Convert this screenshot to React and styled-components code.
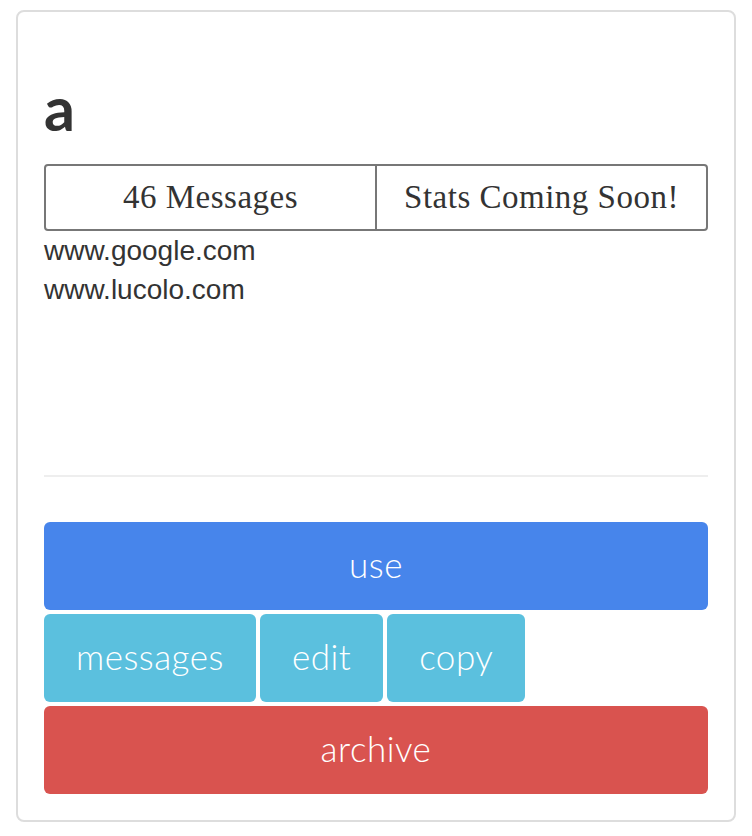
import React from 'react';
import styled, { createGlobalStyle } from 'styled-components';

const GlobalStyle = createGlobalStyle`
  html, body {
    margin: 0;
    padding: 0;
    background: #fff;
  }
`;

const links = ['www.google.com', 'www.lucolo.com'];

const App = () => (
  <>
    <GlobalStyle />
    <Page>
      <Card>
        <Title>a</Title>
        <Stats>
          <StatCell>46 Messages</StatCell>
          <StatCell>Stats Coming Soon!</StatCell>
        </Stats>
        <Links>
          {links.map((link) => (
            <LinkLine key={link}>{link}</LinkLine>
          ))}
        </Links>
        <Divider />
        <Actions>
          <ActionButton variant="primary" block>use</ActionButton>
          <ButtonRow>
            <ActionButton variant="info">messages</ActionButton>
            <ActionButton variant="info">edit</ActionButton>
            <ActionButton variant="info">copy</ActionButton>
          </ButtonRow>
          <ActionButton variant="danger" block>archive</ActionButton>
        </Actions>
      </Card>
    </Page>
  </>
);

const colors = {
  primary: '#4785eb',
  info: '#5bc0de',
  danger: '#d9534f',
};

const Page = styled.div`
  padding: 10px 16px 0;
  width: 720px;
`;

const Card = styled.div`
  border: 2px solid #dddddd;
  border-radius: 8px;
  padding: 0 26px 26px;
  display: flex;
  flex-direction: column;
`;

const Title = styled.h2`
  margin: 64px 0 24px;
  font-family: Lato, "Open Sans", sans-serif;
  font-weight: 700;
  font-size: 61px;
  line-height: 64px;
  color: #333333;
`;

const Stats = styled.div`
  display: flex;
  height: 63px;
  border: 2px solid #777777;
  border-radius: 4px;
`;

const StatCell = styled.div`
  flex: 1;
  display: flex;
  align-items: center;
  justify-content: center;
  font-family: "Liberation Serif", serif;
  font-size: 33px;
  letter-spacing: 0.5px;
  color: #333333;

  & + & {
    border-left: 2px solid #777777;
  }
`;

const Links = styled.div`
  height: 244px;
  font-family: "Liberation Sans", Arial, sans-serif;
  font-size: 28px;
  color: #333333;
`;

const LinkLine = styled.div`
  line-height: 39px;
`;

const Divider = styled.div`
  border-top: 2px solid #eeeeee;
  margin-bottom: 45px;
`;

const Actions = styled.div`
  display: flex;
  flex-direction: column;
  gap: 4px;
`;

const ButtonRow = styled.div`
  display: flex;
  gap: 4px;
`;

const ActionButton = styled.button`
  height: 88px;
  padding: 0 32px 4px;
  width: ${props => (props.block ? '100%' : 'auto')};
  border: none;
  border-radius: 6px;
  background: ${props => colors[props.variant]};
  color: #ffffff;
  font-family: Lato, "Open Sans", sans-serif;
  font-weight: 300;
  font-size: 35px;
  letter-spacing: 0.5px;
  cursor: pointer;
`;

export default App;
